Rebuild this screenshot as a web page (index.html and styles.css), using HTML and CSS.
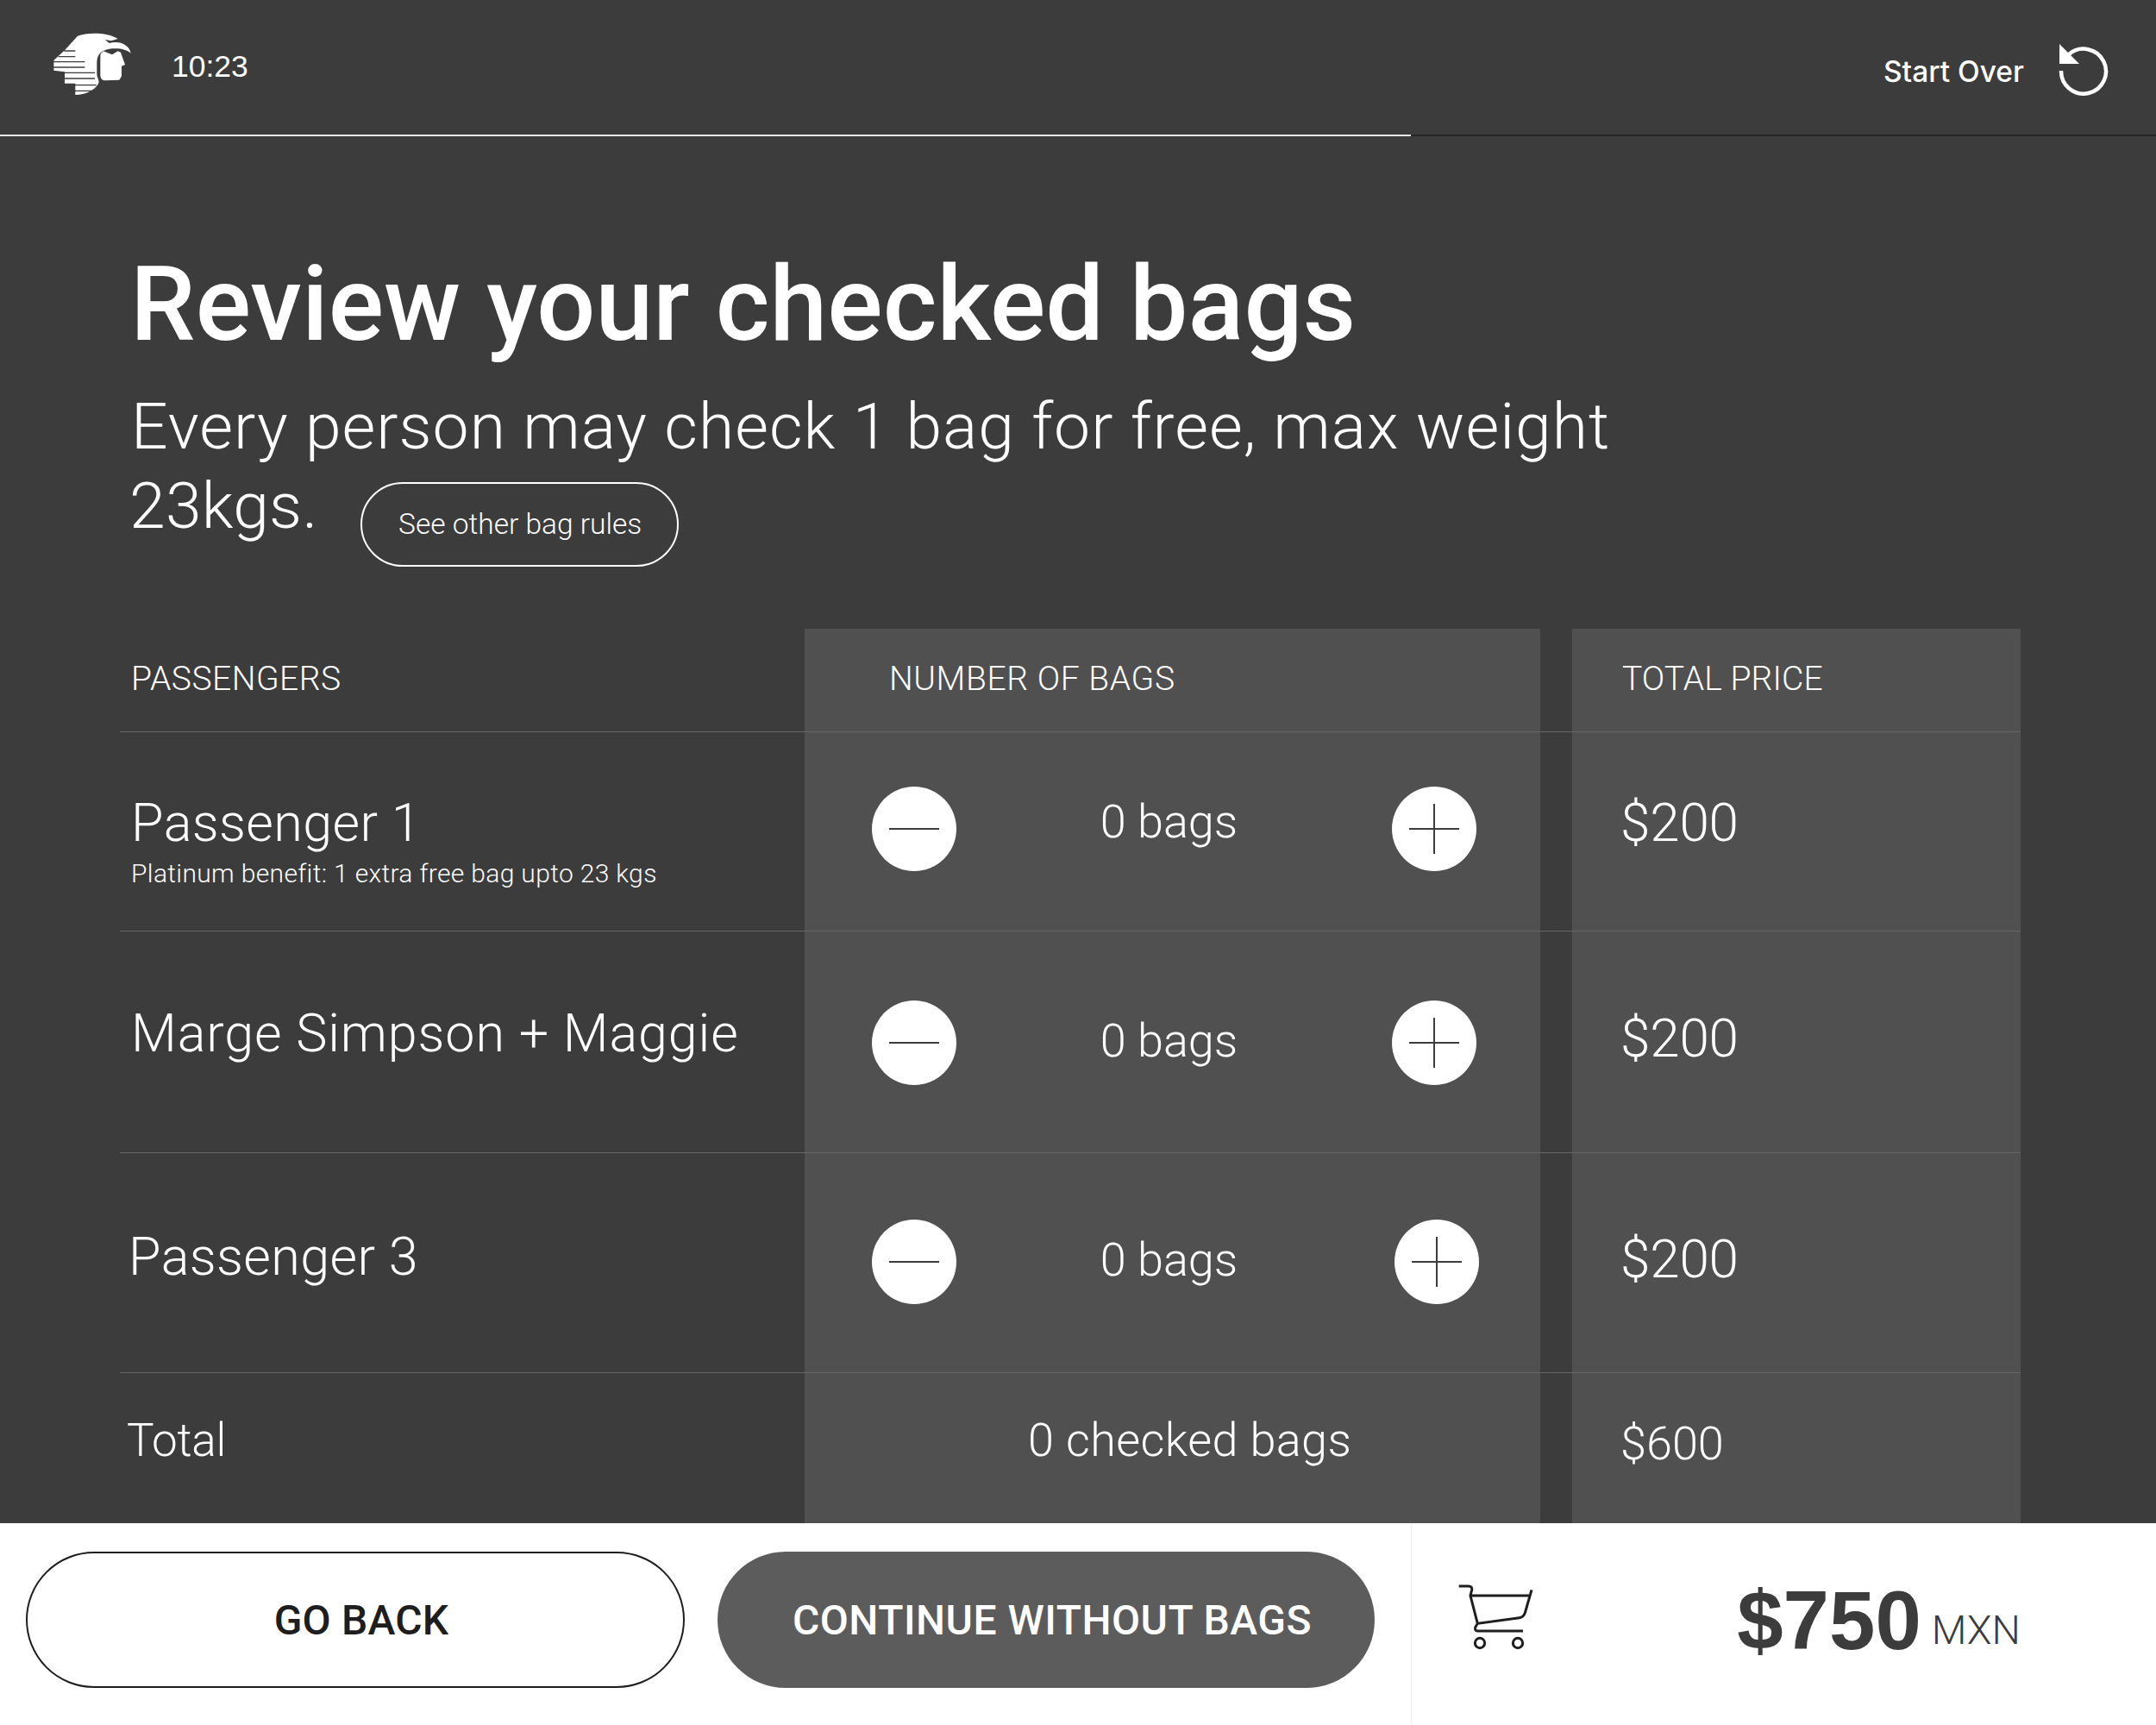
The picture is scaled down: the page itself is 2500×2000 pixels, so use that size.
FILE: index.html
```html
<!DOCTYPE html>
<html lang="en">
<head>
<meta charset="utf-8">
<title>Review your checked bags</title>
<link rel="stylesheet" href="styles.css">
</head>
<body>
<div class="screen">
  <header class="topbar">
    <div class="brand">
      <svg class="logo" viewBox="0 0 315 255"><path fill="#fff" d="M105 35C140 22 210 22 245 45L222 52 200 48 215 60C250 50 285 65 290 95 275 82 250 76 215 80 190 85 172 95 172 130L172 165C172 185 185 190 175 205 160 225 135 240 97 240L97 200 60 200 60 160 22 155 22 120 60 85Z"/><path fill="#3c3c3c" d="M58 85h39v4h-39zM38 105h59v4h-59zM20 123h110v4h-110zM20 142h110v4h-110zM55 161h110v4h-110zM55 181h110v4h-110zM95 204h75v4h-75zM95 224h60v4h-60z"/><path fill="#fff" d="M190 92 195 88 225 100 245 88 255 92 270 135 258 140 258 175 250 188 202 190C188 190 184 180 184 170L184 105C184 97 186 94 190 92Z"/></svg>
      <span class="clock">10:23</span>
    </div>
    <div class="restart">
      <span>Start Over</span>
      <svg class="restart-icon" viewBox="0 0 60 60"><path fill="none" stroke="#fff" stroke-width="4.5" d="M3 31A26 26 0 1 0 12 12"/><path fill="#fff" d="M1 0 24 23 1 23Z"/></svg>
    </div>
  </header>
  <div class="progress"><div class="progress-done"></div></div>
  <main class="content">
    <h1 class="title">Review your checked bags</h1>
    <p class="lead">Every person may check 1 bag for free, max weight</p>
    <div class="lead-row">
      <p class="lead lead-end">23kgs.</p>
      <span class="rules">See other bag rules</span>
    </div>
    <section class="table">
      <div class="cell head">PASSENGERS</div>
      <div class="cell head shade head-bags">NUMBER OF BAGS</div>
      <div class="gap"></div>
      <div class="cell head shade head-price">TOTAL PRICE</div>

      <div class="cell pax r1"><div class="name">Passenger 1</div><div class="note">Platinum benefit: 1 extra free bag upto 23 kgs</div></div>
      <div class="cell shade stepper r1">
        <span class="round"><svg viewBox="0 0 98 98"><path d="M20 49H78"/></svg></span>
        <span class="count">0 bags</span>
        <span class="round"><svg viewBox="0 0 98 98"><path d="M20 49H78M49 20V78"/></svg></span>
      </div>
      <div class="gap"></div>
      <div class="cell shade price r1">$200</div>

      <div class="cell pax r2"><div class="name name-wide">Marge Simpson + Maggie</div></div>
      <div class="cell shade stepper r2">
        <span class="round"><svg viewBox="0 0 98 98"><path d="M20 49H78"/></svg></span>
        <span class="count">0 bags</span>
        <span class="round"><svg viewBox="0 0 98 98"><path d="M20 49H78M49 20V78"/></svg></span>
      </div>
      <div class="gap"></div>
      <div class="cell shade price r2">$200</div>

      <div class="cell pax r3"><div class="name name-left">Passenger 3</div></div>
      <div class="cell shade stepper r3">
        <span class="round"><svg viewBox="0 0 98 98"><path d="M20 49H78"/></svg></span>
        <span class="count">0 bags</span>
        <span class="round"><svg viewBox="0 0 98 98"><path d="M20 49H78M49 20V78"/></svg></span>
      </div>
      <div class="gap"></div>
      <div class="cell shade price r3">$200</div>

      <div class="cell total-label r4">Total</div>
      <div class="cell shade total-bags r4">0 checked bags</div>
      <div class="gap r4"></div>
      <div class="cell shade total-price r4">$600</div>
    </section>
  </main>
  <footer class="bottombar">
    <div class="actions">
      <span class="btn btn-outline">GO BACK</span>
      <span class="btn btn-solid">CONTINUE WITHOUT BAGS</span>
    </div>
    <div class="cart">
      <svg class="cart-icon" viewBox="0 0 315 285"><g fill="none" stroke="#1e1e1e" stroke-width="9"><path d="M35 42H68Q82 42 80 55L75 75 100 172M78 75H280M288 55 265 135Q260 150 245 152L100 172 92 185Q90 198 100 198H258"/><circle cx="108" cy="240" r="17"/><circle cx="240" cy="240" r="17"/></g></svg>
      <div class="sum"><span class="amount">$750</span><span class="currency">MXN</span></div>
    </div>
  </footer>
</div>
</body>
</html>
```
FILE: styles.css
```css
* { box-sizing: border-box; }
html, body { margin: 0; padding: 0; }
body { width: 2500px; height: 2000px; font-family: "Roboto", "Liberation Sans", sans-serif; font-weight: 300; color: #fff; background: #3c3c3c; }
.screen { width: 2500px; height: 2000px; display: flex; flex-direction: column; overflow: hidden; }
.topbar { height: 156px; padding: 30px 53px 0 55px; display: flex; justify-content: space-between; align-items: flex-start; }
.brand { display: flex; align-items: center; gap: 39px; }
.logo { width: 105px; height: 85px; }
.clock { font-family: "Liberation Sans", sans-serif; font-size: 35.5px; font-weight: 400; margin-top: 10px; }
.restart { display: flex; align-items: center; gap: 40px; margin-top: 21px; font-family: "Inter", sans-serif; font-size: 33.5px; font-weight: 500; }
.restart > span { margin-top: 3px; }
.restart-icon { width: 60px; height: 60px; }
.progress { height: 2px; background: #272727; }
.progress-done { width: 1636px; height: 2px; background: #e8e8e8; }
.content { flex: 1; padding: 130px 157px 0 139px; display: flex; flex-direction: column; min-height: 0; }
.title { margin: 0 0 0 12px; font-size: 120px; line-height: 130px; font-weight: 500; letter-spacing: 0.12px; }
.lead { margin: 30px 0 0 13px; font-size: 75px; line-height: 92px; letter-spacing: 1px; }
.lead-row { display: flex; align-items: flex-start; gap: 49px; }
.lead-end { margin: 0 0 0 11px; letter-spacing: 0.3px; }
.rules { width: 369px; height: 98px; margin-top: 19px; border: 2px solid #fff; border-radius: 49px; display: flex; align-items: center; justify-content: center; font-size: 33.5px; padding: 0 0 2px 2px; }
.table { margin-top: 72px; flex: 1; display: grid; grid-template-columns: 794px 853px 37px 520px; grid-template-rows: 120px 231px 257px 255px 1fr; }
.cell { border-bottom: 1px solid #666; }
.shade { background: #505050; }
.gap { border-bottom: 1px solid #666; }
.head { font-size: 39px; letter-spacing: 0.5px; padding: 35px 0 0 13px; }
.head-bags { padding-left: 98px; letter-spacing: 0.6px; }
.head-price { padding-left: 58px; letter-spacing: 0.1px; }
.pax { padding: 70px 0 0 13px; }
.name { font-size: 61px; line-height: 70px; letter-spacing: 0.4px; }
.name-wide { letter-spacing: 0.9px; }
.note { font-size: 30px; line-height: 40px; letter-spacing: 0.35px; margin-top: 4px; }
.name-left { margin-left: -3px; }
.stepper { display: flex; align-items: flex-start; justify-content: space-between; padding: 63px 74px 0 78px; }
.stepper.r2 { padding-top: 80px; }
.stepper.r3 { padding-top: 77px; padding-right: 71px; }
.pax.r2 { padding-top: 83px; }
.pax.r3 { padding-top: 85px; }
.round { width: 98px; height: 98px; border-radius: 50%; background: #fff; flex: none; }
.round svg { display: block; width: 98px; height: 98px; }
.round path { stroke: #3c3c3c; stroke-width: 2; fill: none; }
.count { font-size: 54px; line-height: 70px; margin: 6px 12px 0 0; }
.stepper.r2 .count { margin-top: 12px; }
.stepper.r3 .count { margin: 12px 15px 0 0; }
.price { font-size: 62px; line-height: 70px; padding: 70px 0 0 56px; letter-spacing: -0.2px; }
.price.r2 { padding-top: 89px; }
.price.r3 { padding-top: 88px; }
.r4 { border-bottom: 0; }
.total-label { font-size: 53px; letter-spacing: -0.2px; padding: 47px 0 0 8px; }
.total-bags { font-size: 54px; letter-spacing: 0.4px; padding: 46px 0 0 259px; }
.total-price { font-size: 54px; padding: 50px 0 0 56px; }
.bottombar { height: 234px; background: #fff; display: flex; color: #3c3c3c; flex: none; }
.actions { width: 1637px; padding: 33px 0 0 30px; display: flex; align-items: flex-start; gap: 38px; border-right: 1px solid #eee; }
.btn { width: 762px; height: 158px; padding-left: 14px; border-radius: 79px; display: flex; align-items: center; justify-content: center; font-size: 48px; font-weight: 500; letter-spacing: 0.5px; }
.btn-outline { width: 764px; border: 2px solid #1e1e1e; color: #1e1e1e; letter-spacing: 0.2px; }
.btn-solid { background: #5c5c5c; color: #fff; }
.cart { flex: 1; display: flex; justify-content: space-between; align-items: flex-start; padding: 59px 157px 0 43px; }
.cart-icon { width: 105px; height: 95px; }
.sum { display: flex; align-items: flex-start; gap: 12px; margin-top: -1px; }
.amount { font-family: "Liberation Sans", sans-serif; font-size: 96px; line-height: 110px; font-weight: 700; }
.currency { font-size: 47px; margin-top: 38px; }
```
